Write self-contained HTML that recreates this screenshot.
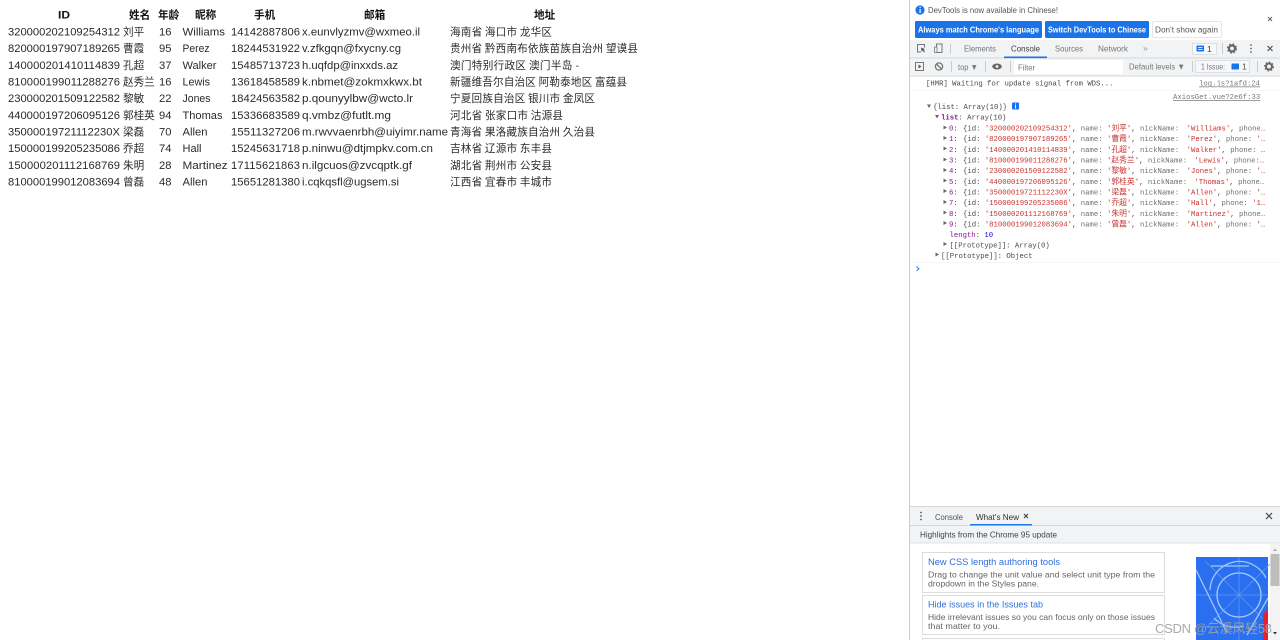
<!DOCTYPE html>
<html><head><meta charset="utf-8"><style>
html,body{margin:0;padding:0;background:#fff;width:1280px;height:640px;overflow:hidden}
svg{display:block;filter:blur(.35px)}
text{white-space:pre}
.t{font:11.2px "Liberation Sans","Noto Sans CJK SC",sans-serif;fill:#2a2a2a}
.c{font:10.6px "Noto Sans CJK SC","Liberation Sans",sans-serif;fill:#2a2a2a}
.h{font:bold 10.6px "Liberation Sans","Noto Sans CJK SC",sans-serif;fill:#111}
.d{font:8.6px "Liberation Sans",sans-serif;fill:#555}
.b{font:bold 8.4px "Liberation Sans",sans-serif;fill:#fff}
.m{font:7.28px "Liberation Mono","Noto Sans CJK SC",monospace;fill:#4a4a4a}
.k{fill:#707070}.s{fill:#c8322e}.i{fill:#881391}
.z{font-size:7.8px;font-family:"Noto Sans CJK SC",sans-serif}
.l{font:9px "Liberation Sans",sans-serif;fill:#2f6fd8}
</style></head><body>
<svg width="1280" height="640" viewBox="0 0 1280 640" xmlns="http://www.w3.org/2000/svg">
<rect width="1280" height="640" fill="#fff"/>
<!-- table header -->
<text class="h" x="58" y="18.5" textLength="12" lengthAdjust="spacingAndGlyphs">ID</text>
<text class="h" x="129" y="18.5">姓名</text><text class="h" x="158" y="18.5">年龄</text>
<text class="h" x="195" y="18.5">昵称</text><text class="h" x="254" y="18.5">手机</text>
<text class="h" x="364" y="18.5">邮箱</text><text class="h" x="534" y="18.5">地址</text>
<!-- rows -->
<g>
<text class="t" x="8" y="35.5" textLength="112">320000202109254312</text><text class="c" x="123" y="35.5">刘平</text><text class="t" x="159" y="35.5">16</text><text class="t" x="182.500" y="35.5" textLength="42.500" lengthAdjust="spacingAndGlyphs">Williams</text><text class="t" x="231" y="35.5" textLength="69">14142887806</text><text class="t" x="302" y="35.5" textLength="118" lengthAdjust="spacingAndGlyphs">x.eunvlyzmv@wxmeo.il</text><text class="c" x="450" y="35.5" textLength="102">海南省 海口市 龙华区</text>
<text class="t" x="8" y="52.2" textLength="112">820000197907189265</text><text class="c" x="123" y="52.2">曹霞</text><text class="t" x="159" y="52.2">95</text><text class="t" x="182.500" y="52.2" textLength="27" lengthAdjust="spacingAndGlyphs">Perez</text><text class="t" x="231" y="52.2" textLength="69">18244531922</text><text class="t" x="302" y="52.2" textLength="99" lengthAdjust="spacingAndGlyphs">v.zfkgqn@fxycny.cg</text><text class="c" x="450" y="52.2" textLength="188">贵州省 黔西南布依族苗族自治州 望谟县</text>
<text class="t" x="8" y="68.9" textLength="112">140000201410114839</text><text class="c" x="123" y="68.9">孔超</text><text class="t" x="159" y="68.9">37</text><text class="t" x="182.500" y="68.9" textLength="34" lengthAdjust="spacingAndGlyphs">Walker</text><text class="t" x="231" y="68.9" textLength="69">15485713723</text><text class="t" x="302" y="68.9" textLength="96" lengthAdjust="spacingAndGlyphs">h.uqfdp@inxxds.az</text><text class="c" x="450" y="68.9" textLength="129">澳门特别行政区 澳门半岛 -</text>
<text class="t" x="8" y="85.5" textLength="112">810000199011288276</text><text class="c" x="123" y="85.5">赵秀兰</text><text class="t" x="159" y="85.5">16</text><text class="t" x="182.500" y="85.5" textLength="27.500" lengthAdjust="spacingAndGlyphs">Lewis</text><text class="t" x="231" y="85.5" textLength="69">13618458589</text><text class="t" x="302" y="85.5" textLength="120" lengthAdjust="spacingAndGlyphs">k.nbmet@zokmxkwx.bt</text><text class="c" x="450" y="85.5" textLength="177">新疆维吾尔自治区 阿勒泰地区 富蕴县</text>
<text class="t" x="8" y="102.2" textLength="112">230000201509122582</text><text class="c" x="123" y="102.2">黎敏</text><text class="t" x="159" y="102.2">22</text><text class="t" x="182.500" y="102.2" textLength="28" lengthAdjust="spacingAndGlyphs">Jones</text><text class="t" x="231" y="102.2" textLength="69">18424563582</text><text class="t" x="302" y="102.2" textLength="111" lengthAdjust="spacingAndGlyphs">p.qounyylbw@wcto.lr</text><text class="c" x="450" y="102.2" textLength="145">宁夏回族自治区 银川市 金凤区</text>
<text class="t" x="8" y="118.9" textLength="112">440000197206095126</text><text class="c" x="123" y="118.9">郭桂英</text><text class="t" x="159" y="118.9">94</text><text class="t" x="182.500" y="118.9" textLength="40" lengthAdjust="spacingAndGlyphs">Thomas</text><text class="t" x="231" y="118.9" textLength="69">15336683589</text><text class="t" x="302" y="118.9" textLength="89" lengthAdjust="spacingAndGlyphs">q.vmbz@futlt.mg</text><text class="c" x="450" y="118.9" textLength="113">河北省 张家口市 沽源县</text>
<text class="t" x="8" y="135.5" textLength="112">35000019721112230X</text><text class="c" x="123" y="135.5">梁磊</text><text class="t" x="159" y="135.5">70</text><text class="t" x="182.500" y="135.5" textLength="25" lengthAdjust="spacingAndGlyphs">Allen</text><text class="t" x="231" y="135.5" textLength="69">15511327206</text><text class="t" x="302" y="135.5" textLength="146" lengthAdjust="spacingAndGlyphs">m.rwvvaenrbh@uiyimr.name</text><text class="c" x="450" y="135.5" textLength="145">青海省 果洛藏族自治州 久治县</text>
<text class="t" x="8" y="152.2" textLength="112">150000199205235086</text><text class="c" x="123" y="152.2">乔超</text><text class="t" x="159" y="152.2">74</text><text class="t" x="182.500" y="152.2" textLength="19" lengthAdjust="spacingAndGlyphs">Hall</text><text class="t" x="231" y="152.2" textLength="69">15245631718</text><text class="t" x="302" y="152.2" textLength="131" lengthAdjust="spacingAndGlyphs">p.ninwu@dtjmpkv.com.cn</text><text class="c" x="450" y="152.2" textLength="102">吉林省 辽源市 东丰县</text>
<text class="t" x="8" y="168.9" textLength="112">150000201112168769</text><text class="c" x="123" y="168.9">朱明</text><text class="t" x="159" y="168.9">28</text><text class="t" x="182.500" y="168.9" textLength="45" lengthAdjust="spacingAndGlyphs">Martinez</text><text class="t" x="231" y="168.9" textLength="69">17115621863</text><text class="t" x="302" y="168.9" textLength="110" lengthAdjust="spacingAndGlyphs">n.ilgcuos@zvcqptk.gf</text><text class="c" x="450" y="168.9" textLength="102">湖北省 荆州市 公安县</text>
<text class="t" x="8" y="185.5" textLength="112">810000199012083694</text><text class="c" x="123" y="185.5">曾磊</text><text class="t" x="159" y="185.5">48</text><text class="t" x="182.500" y="185.5" textLength="25" lengthAdjust="spacingAndGlyphs">Allen</text><text class="t" x="231" y="185.5" textLength="69">15651281380</text><text class="t" x="302" y="185.5" textLength="97" lengthAdjust="spacingAndGlyphs">i.cqkqsfl@ugsem.si</text><text class="c" x="450" y="185.5" textLength="102">江西省 宜春市 丰城市</text>
</g>
<!-- devtools panel -->
<rect x="909" y="0" width="1" height="640" fill="#c9cbce"/>
<circle cx="920" cy="10" r="4.6" fill="#1a73e8"/><rect x="919.5" y="9" width="1.2" height="4" fill="#fff"/><rect x="919.5" y="6.8" width="1.2" height="1.2" fill="#fff"/>
<text class="d" x="928" y="13" textLength="130" lengthAdjust="spacingAndGlyphs">DevTools is now available in Chinese!</text>
<rect x="915" y="21" width="127" height="17" rx="1.5" fill="#1a73e8"/><text class="b" x="918" y="32.5" textLength="121" lengthAdjust="spacingAndGlyphs">Always match Chrome's language</text>
<rect x="1045" y="21" width="104" height="17" rx="1.5" fill="#1a73e8"/><text class="b" x="1048" y="32.5" textLength="98" lengthAdjust="spacingAndGlyphs">Switch DevTools to Chinese</text>
<rect x="1152.5" y="21.5" width="69" height="16" rx="1.5" fill="#fff" stroke="#e3e5e8"/><text class="d" x="1155" y="32.5" textLength="63" lengthAdjust="spacingAndGlyphs">Don't show again</text>
<path d="M1268 17l4 4m0-4l-4 4" stroke="#666" stroke-width="1" fill="none"/>
<!-- tab bar -->
<rect x="910" y="40" width="370" height="18" fill="#f1f3f4"/><rect x="910" y="57.5" width="370" height="1" fill="#d5d7da"/>
<path d="M921 52h-3.500v-7.500h7v3" stroke="#777" fill="none"/><path d="M921 47.500l4 1.600-1.500.8 1.500 2-.8.6-1.600-2-1 1.200z" fill="#555"/>
<rect x="936.5" y="44" width="5.500" height="8.500" fill="none" stroke="#777"/><rect x="934.5" y="47" width="2.500" height="5.500" fill="#f1f3f4" stroke="#777" stroke-width=".8"/>
<rect x="950" y="44" width="1" height="10" fill="#ccc"/>
<text class="d" x="964" y="51.5" textLength="32" lengthAdjust="spacingAndGlyphs" style="fill:#777">Elements</text><text class="d" x="1011" y="51.5" textLength="29" lengthAdjust="spacingAndGlyphs" style="fill:#444">Console</text><text class="d" x="1055" y="51.5" textLength="28" lengthAdjust="spacingAndGlyphs" style="fill:#777">Sources</text><text class="d" x="1098" y="51.5" textLength="30" lengthAdjust="spacingAndGlyphs" style="fill:#777">Network</text><text class="d" x="1143" y="51" style="fill:#999">»</text>
<rect x="1004" y="56.5" width="43" height="1.600" fill="#1a73e8"/>
<rect x="1192.5" y="43.5" width="24" height="11" fill="#fff" fill-opacity=".5" stroke="#dcdee1"/><rect x="1196.500" y="45.500" width="7.500" height="6" rx=".6" fill="#1a73e8"/><rect x="1198" y="47.200" width="4.500" height=".8" fill="#fff"/><rect x="1198" y="49" width="4.500" height=".8" fill="#fff"/><text class="d" x="1207" y="52" style="fill:#444">1</text>
<rect x="1222" y="43" width="1" height="11" fill="#ccc"/>
<circle cx="1232" cy="48.5" r="3" fill="none" stroke="#666" stroke-width="2.200"/><circle cx="1232" cy="48.5" r="4.500" fill="none" stroke="#666" stroke-width="1.200" stroke-dasharray="1.800 1.800"/>
<circle cx="1251" cy="45" r=".9" fill="#666"/><circle cx="1251" cy="48.5" r=".9" fill="#666"/><circle cx="1251" cy="52" r=".9" fill="#666"/>
<path d="M1267.500 46l5 5m0-5l-5 5" stroke="#555" stroke-width="1.200" fill="none"/>
<!-- filter bar -->
<rect x="910" y="58.5" width="370" height="17.5" fill="#f1f3f4"/><rect x="910" y="75.5" width="370" height="1" fill="#d5d7da"/>
<rect x="915.5" y="62.5" width="8" height="8" fill="none" stroke="#777"/><path d="M918.500 64.500l3 2-3 2z" fill="#555"/>
<circle cx="939" cy="66.5" r="3.600" fill="none" stroke="#777" stroke-width="1.300"/><path d="M936.500 64l5 5" stroke="#777" stroke-width="1.300"/>
<rect x="951" y="61" width="1" height="11" fill="#ccc"/>
<text class="d" x="958" y="70" textLength="20" lengthAdjust="spacingAndGlyphs" style="fill:#777">top ▼</text>
<rect x="985" y="61" width="1" height="11" fill="#ccc"/>
<ellipse cx="997" cy="66.5" rx="4.800" ry="3" fill="#666"/><circle cx="997" cy="66.5" r="1.400" fill="#f1f3f4"/>
<rect x="1010" y="61" width="1" height="11" fill="#ccc"/>
<rect x="1014" y="60" width="109" height="14" fill="#fff"/>
<text class="d" x="1018" y="70.5" textLength="17" lengthAdjust="spacingAndGlyphs" style="fill:#777">Filter</text>
<text class="d" x="1129" y="69.5" textLength="56" lengthAdjust="spacingAndGlyphs" style="fill:#777">Default levels ▼</text>
<rect x="1192" y="61" width="1" height="11" fill="#ccc"/>
<rect x="1195.5" y="60.5" width="54" height="12" fill="#f7f8f9" stroke="#dcdee1"/><text class="d" x="1201" y="69.5" textLength="24" lengthAdjust="spacingAndGlyphs" style="fill:#777">1 Issue:</text><rect x="1231.500" y="63.500" width="7.500" height="6" rx=".6" fill="#1a73e8"/><text class="d" x="1242" y="69.5">1</text>
<rect x="1257" y="61" width="1" height="11" fill="#ccc"/>
<circle cx="1269" cy="66.5" r="3" fill="none" stroke="#666" stroke-width="2"/><circle cx="1269" cy="66.5" r="4.400" fill="none" stroke="#666" stroke-width="1.100" stroke-dasharray="1.700 1.700"/>
<!-- console -->
<text class="m" x="926" y="85.5">[HMR] Waiting for update signal from WDS...</text>
<text class="m" x="1199" y="85.5" text-decoration="underline" style="fill:#777">log.js?1afd:24</text>
<rect x="910" y="90" width="370" height=".6" fill="#f0f0f0"/>
<text class="m" x="1173" y="99" text-decoration="underline" style="fill:#777">AxiosGet.vue?2e6f:33</text>
<path d="M927 104.500h4l-2 3.500z" fill="#666"/>
<text class="m" x="933" y="108.8" font-style="italic">{list: Array(10)}</text>
<rect x="1012" y="102.500" width="7" height="7" rx="1" fill="#1a73e8"/><rect x="1015" y="105" width="1" height="3.500" fill="#fff"/><rect x="1015" y="103.500" width="1" height="1" fill="#fff"/>
<path d="M935 115h4l-2 3.500z" fill="#666"/>
<text class="m" x="941" y="119.5"><tspan class="i" font-weight="bold">list</tspan>: Array(10)</text>
<g fill="#666">
<path d="M943.5 125.5l3.5 2-3.5 2z"/><path d="M943.5 136l3.5 2-3.5 2z"/><path d="M943.5 146.500l3.500 2-3.500 2z"/><path d="M943.5 157.500l3.500 2-3.500 2z"/><path d="M943.5 168l3.500 2-3.500 2z"/><path d="M943.5 178.500l3.500 2-3.500 2z"/><path d="M943.5 189l3.500 2-3.500 2z"/><path d="M943.5 200l3.500 2-3.500 2z"/><path d="M943.5 210.500l3.500 2-3.500 2z"/><path d="M943.5 221l3.500 2-3.500 2z"/><path d="M943.5 242l3.500 2-3.500 2z"/><path d="M935.500 252.500l3.500 2-3.500 2z"/>
</g>
<text class="m i" x="949" y="130.5" font-weight="bold">0:</text><text class="m" x="963" y="130.5">{id: <tspan class="s">'320000202109254312'</tspan>, <tspan class="k">name:</tspan> <tspan class="s">'<tspan class="z">刘平</tspan>'</tspan>, <tspan class="k">nickName:</tspan> <tspan class="s" dx="3">'Williams'</tspan>, <tspan class="k">phone…</tspan></text>
<text class="m i" x="949" y="141.2" font-weight="bold">1:</text><text class="m" x="963" y="141.2">{id: <tspan class="s">'820000197907189265'</tspan>, <tspan class="k">name:</tspan> <tspan class="s">'<tspan class="z">曹霞</tspan>'</tspan>, <tspan class="k">nickName:</tspan> <tspan class="s" dx="3">'Perez'</tspan>, <tspan class="k">phone:</tspan> <tspan class="s">'…</tspan></text>
<text class="m i" x="949" y="151.8" font-weight="bold">2:</text><text class="m" x="963" y="151.8">{id: <tspan class="s">'140000201410114839'</tspan>, <tspan class="k">name:</tspan> <tspan class="s">'<tspan class="z">孔超</tspan>'</tspan>, <tspan class="k">nickName:</tspan> <tspan class="s" dx="3">'Walker'</tspan>, <tspan class="k">phone:</tspan> <tspan class="s">…</tspan></text>
<text class="m i" x="949" y="162.5" font-weight="bold">3:</text><text class="m" x="963" y="162.5">{id: <tspan class="s">'810000199011288276'</tspan>, <tspan class="k">name:</tspan> <tspan class="s">'<tspan class="z">赵秀兰</tspan>'</tspan>, <tspan class="k">nickName:</tspan> <tspan class="s" dx="3">'Lewis'</tspan>, <tspan class="k">phone:…</tspan></text>
<text class="m i" x="949" y="173.2" font-weight="bold">4:</text><text class="m" x="963" y="173.2">{id: <tspan class="s">'230000201509122582'</tspan>, <tspan class="k">name:</tspan> <tspan class="s">'<tspan class="z">黎敏</tspan>'</tspan>, <tspan class="k">nickName:</tspan> <tspan class="s" dx="3">'Jones'</tspan>, <tspan class="k">phone:</tspan> <tspan class="s">'…</tspan></text>
<text class="m i" x="949" y="183.8" font-weight="bold">5:</text><text class="m" x="963" y="183.8">{id: <tspan class="s">'440000197206095126'</tspan>, <tspan class="k">name:</tspan> <tspan class="s">'<tspan class="z">郭桂英</tspan>'</tspan>, <tspan class="k">nickName:</tspan> <tspan class="s" dx="3">'Thomas'</tspan>, <tspan class="k">phone…</tspan></text>
<text class="m i" x="949" y="194.5" font-weight="bold">6:</text><text class="m" x="963" y="194.5">{id: <tspan class="s">'35000019721112230X'</tspan>, <tspan class="k">name:</tspan> <tspan class="s">'<tspan class="z">梁磊</tspan>'</tspan>, <tspan class="k">nickName:</tspan> <tspan class="s" dx="3">'Allen'</tspan>, <tspan class="k">phone:</tspan> <tspan class="s">'…</tspan></text>
<text class="m i" x="949" y="205.2" font-weight="bold">7:</text><text class="m" x="963" y="205.2">{id: <tspan class="s">'150000199205235086'</tspan>, <tspan class="k">name:</tspan> <tspan class="s">'<tspan class="z">乔超</tspan>'</tspan>, <tspan class="k">nickName:</tspan> <tspan class="s" dx="3">'Hall'</tspan>, <tspan class="k">phone:</tspan> <tspan class="s">'1…</tspan></text>
<text class="m i" x="949" y="215.8" font-weight="bold">8:</text><text class="m" x="963" y="215.8">{id: <tspan class="s">'150000201112168769'</tspan>, <tspan class="k">name:</tspan> <tspan class="s">'<tspan class="z">朱明</tspan>'</tspan>, <tspan class="k">nickName:</tspan> <tspan class="s" dx="3">'Martinez'</tspan>, <tspan class="k">phone…</tspan></text>
<text class="m i" x="949" y="226.5" font-weight="bold">9:</text><text class="m" x="963" y="226.5">{id: <tspan class="s">'810000199012083694'</tspan>, <tspan class="k">name:</tspan> <tspan class="s">'<tspan class="z">曾磊</tspan>'</tspan>, <tspan class="k">nickName:</tspan> <tspan class="s" dx="3">'Allen'</tspan>, <tspan class="k">phone:</tspan> <tspan class="s">'…</tspan></text>
<text class="m" x="949.5" y="237"><tspan class="i">length</tspan>: <tspan style="fill:#1c00cf">10</tspan></text>
<text class="m" x="949.5" y="247.5">[[Prototype]]: Array(0)</text>
<text class="m" x="941" y="258">[[Prototype]]: Object</text>
<rect x="910" y="262" width="370" height=".6" fill="#f0f0f0"/>
<path d="M916.500 266.500l2.500 2.200-2.500 2.200" fill="none" stroke="#2a7de1" stroke-width="1"/>
<!-- drawer -->
<rect x="910" y="506" width="370" height="1" fill="#d5d7da"/>
<rect x="910" y="507" width="370" height="18" fill="#f1f3f4"/><rect x="910" y="525" width="370" height="1" fill="#d5d7da"/>
<circle cx="921" cy="512.5" r=".9" fill="#555"/><circle cx="921" cy="516" r=".9" fill="#555"/><circle cx="921" cy="519.5" r=".9" fill="#555"/>
<text class="d" x="935" y="520" textLength="28" lengthAdjust="spacingAndGlyphs">Console</text>
<text class="d" x="976" y="520" textLength="43" lengthAdjust="spacingAndGlyphs" style="fill:#333">What's New</text>
<path d="M1024 514l4 4m0-4l-4 4" stroke="#444" stroke-width="1.100" fill="none"/>
<rect x="970" y="524" width="62" height="1.400" fill="#1a73e8"/>
<path d="M1266 513l6 6m0-6l-6 6" stroke="#444" stroke-width="1.200" fill="none"/>
<rect x="910" y="526" width="370" height="17" fill="#f1f3f4"/><rect x="910" y="542.5" width="370" height="1" fill="#dfe1e4"/>
<text class="d" x="920" y="537.5" textLength="137" lengthAdjust="spacingAndGlyphs" style="fill:#444">Highlights from the Chrome 95 update</text>
<!-- cards -->
<rect x="922.5" y="552.5" width="242" height="40" fill="#fff" stroke="#dcdcdc"/>
<text class="l" x="928" y="565" textLength="132" lengthAdjust="spacingAndGlyphs">New CSS length authoring tools</text>
<text class="d" x="928" y="577.5" textLength="227" lengthAdjust="spacingAndGlyphs" style="fill:#666">Drag to change the unit value and select unit type from the</text>
<text class="d" x="928" y="586.5" textLength="111" lengthAdjust="spacingAndGlyphs" style="fill:#666">dropdown in the Styles pane.</text>
<rect x="922.5" y="595.5" width="242" height="39" fill="#fff" stroke="#dcdcdc"/>
<text class="l" x="928" y="607.5" textLength="115" lengthAdjust="spacingAndGlyphs">Hide issues in the Issues tab</text>
<text class="d" x="928" y="620" textLength="227" lengthAdjust="spacingAndGlyphs" style="fill:#666">Hide irrelevant issues so you can focus only on those issues</text>
<text class="d" x="928" y="629" textLength="72" lengthAdjust="spacingAndGlyphs" style="fill:#666">that matter to you.</text>
<rect x="922.5" y="638.5" width="242" height="6" fill="#fff" stroke="#dcdcdc"/>
<!-- hero image -->
<svg x="1196" y="557" width="72" height="83" viewBox="1196 557 72 83">
<rect x="1196" y="557" width="72" height="83" fill="#2a6fef"/>
<g fill="none" stroke="#5f97f3" stroke-width=".8"><path d="M1239 557v83M1196 595h72M1205 561l68 68M1273 561l-68 68"/></g>
<g fill="none" stroke="#a3c6f9" stroke-width="1.300"><circle cx="1239" cy="595" r="22"/><path d="M1210 590a29.500 29.500 0 0 1 56-12M1196 570l31 63M1268 598l-21 37M1211 566l38 0M1214 618a29.500 29.500 0 0 0 30 8"/></g>
<path d="M1263 614l5-5v31h-5z" fill="#e8202a"/>
</svg>
<rect x="1270" y="544" width="10" height="96" fill="#f3f3f3"/>
<rect x="1270.5" y="554" width="9" height="32" fill="#bdbdbd"/>
<path d="M1273 551l2-2.500 2 2.500z" fill="#aaa"/><path d="M1273 632l2 2.500 2-2.500z" fill="#333"/>
<!-- watermark -->
<text x="1155" y="633" font-size="13" fill="#a2a2a2" fill-opacity=".9" textLength="117" style="font-family:'Liberation Sans','Noto Sans CJK SC',sans-serif">CSDN @云溪风轻58</text>
</svg>
</body></html>
